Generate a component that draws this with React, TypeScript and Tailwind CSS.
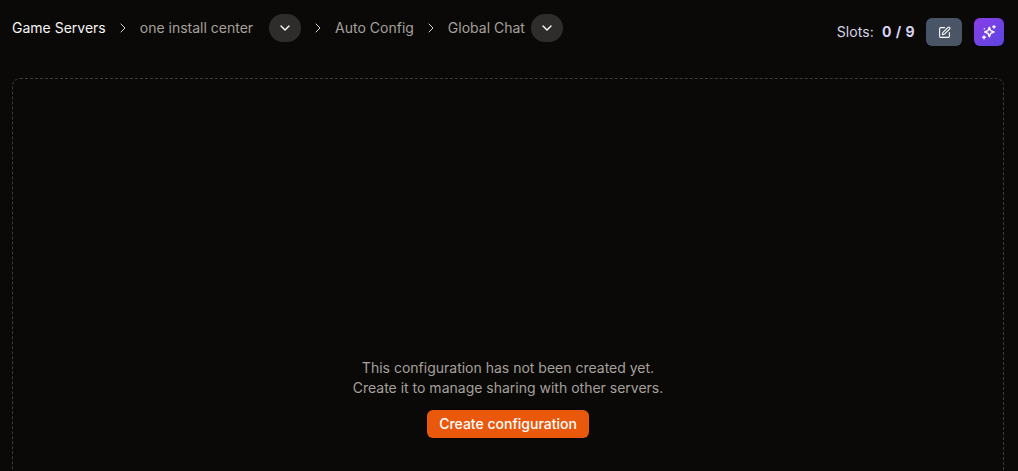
import React from 'react';
import { ChevronDown, ChevronRight, SquarePen } from 'lucide-react';

const Separator: React.FC = () => (
  <ChevronRight className="w-4 h-4 text-stone-300 mx-[9px]" strokeWidth={1.5} />
);

const ExpandButton: React.FC<{ className?: string }> = ({ className }) => (
  <button className={`w-8 h-7 rounded-full bg-[#2f2d2c] flex items-center justify-center text-white ${className ?? ''}`}>
    <ChevronDown className="w-4 h-4" strokeWidth={2} />
  </button>
);

const SparkleIcon: React.FC = () => (
  <svg viewBox="0 0 24 24" className="w-4 h-4" fill="none" stroke="currentColor" strokeWidth={2.2} strokeLinecap="round" strokeLinejoin="round">
    <path d="M12.5 5 14.5 10 19.5 12 14.5 14 12.5 19 10.5 14 5.5 12 10.5 10Z" />
    <path d="M19.5 2.5v3.5M17.75 4.25h3.5" />
    <path d="M4.5 18v4M2.5 20h4" />
    <path d="M5 7h.01" />
  </svg>
);

const App: React.FC = () => {
  return (
    <div className="w-[1018px] h-[471px] overflow-hidden bg-[#0a0908] pl-3 pr-[14px] font-['Inter',sans-serif]">
      {/* Header */}
      <div className="h-[78px] flex items-start justify-between">
        <div className="flex items-center h-7 mt-[14px] text-sm text-stone-400">
          <span className="text-stone-100">Game Servers</span>
          <Separator />
          <span>one install center</span>
          <ExpandButton className="ml-[16px]" />
          <Separator />
          <span>Auto Config</span>
          <Separator />
          <span>Global Chat</span>
          <ExpandButton className="ml-[6px]" />
        </div>
        <div className="flex items-center h-7 mt-[18px]">
          <span className="text-sm tracking-[0.1px] text-[#d6d3e6]">Slots:</span>
          <span className="ml-2 text-sm font-bold tracking-[0.5px] text-[#d6d3f0]">0 / 9</span>
          <button className="ml-[11px] w-9 h-7 rounded-md bg-gradient-to-br from-[#475569] to-[#4b5563] flex items-center justify-center text-white">
            <SquarePen className="w-[13px] h-[13px]" strokeWidth={2} />
          </button>
          <button className="ml-3 w-[30px] h-7 rounded-md bg-gradient-to-br from-[#8b3de8] to-[#5a45e0] flex items-center justify-center text-white">
            <SparkleIcon />
          </button>
        </div>
      </div>

      {/* Empty state */}
      <div className="h-[420px] rounded-lg border border-dashed border-[#3d3a38] flex flex-col items-center pt-[279px]">
        <p className="text-sm leading-5 text-stone-400 text-center">
          This configuration has not been created yet.
          <br />
          Create it to manage sharing with other servers.
        </p>
        <button className="mt-3 h-7 px-3 rounded-md bg-[#ea580c] text-sm font-medium text-white">
          Create configuration
        </button>
      </div>
    </div>
  );
};

export default App;
